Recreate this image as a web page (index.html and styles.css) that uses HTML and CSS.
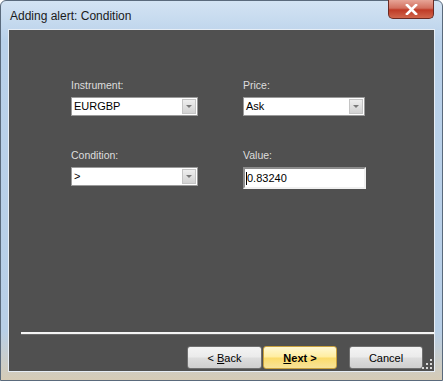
FILE: index.html
```html
<!DOCTYPE html>
<html>
  <head>
    <meta charset="utf-8" />
    <link rel="stylesheet" href="styles.css">
  </head>
  <body>
    <div class="window">
      <div class="titlebar">
        <span class="title">Adding alert: Condition</span>
        <button class="close">
          <svg width="13" height="11" viewBox="0 0 13 11">
            <path d="M2 1 L11 10 M11 1 L2 10" stroke="#ffffff" stroke-width="2.6" stroke-linecap="square" />
          </svg>
        </button>
      </div>

      <div class="client">
        <div class="form">
          <div class="field">
            <label>Instrument:</label>
            <div class="combo wide">
              <span class="combo-text">EURGBP</span>
              <span class="drop"><i></i></span>
            </div>
          </div>
          <div class="field">
            <label>Price:</label>
            <div class="combo">
              <span class="combo-text">Ask</span>
              <span class="drop"><i></i></span>
            </div>
          </div>
          <div class="field">
            <label>Condition:</label>
            <div class="combo wide">
              <span class="combo-text">&gt;</span>
              <span class="drop"><i></i></span>
            </div>
          </div>
          <div class="field">
            <label>Value:</label>
            <div class="textbox"><span class="caret"></span>0.83240</div>
          </div>
        </div>

        <div class="separator"></div>

        <div class="buttons">
          <button class="btn">&lt; <u>B</u>ack</button>
          <button class="btn next"><u>N</u>ext &gt;</button>
          <button class="btn cancel">Cancel</button>
        </div>

        <!-- size grip -->
        <svg class="grip" width="10" height="10" viewBox="0 0 10 10">
          <g fill="#d8d8d8">
            <rect x="8" y="0" width="2" height="2" />
            <rect x="4" y="4" width="2" height="2" />
            <rect x="8" y="4" width="2" height="2" />
            <rect x="0" y="8" width="2" height="2" />
            <rect x="4" y="8" width="2" height="2" />
            <rect x="8" y="8" width="2" height="2" />
          </g>
        </svg>
      </div>
    </div>
  </body>
</html>
```

FILE: styles.css
```css
/* Win7 style dialog */
body {
  margin: 0;
  width: 443px;
  height: 381px;
  overflow: hidden;
  font-family: "Liberation Sans", Arial, sans-serif;
}

.window {
  width: 443px;
  height: 381px;
  box-sizing: border-box;
  border: 1px solid #5a6a7c;
  border-radius: 6px 6px 0 0;
  background: linear-gradient(180deg, #d3e3f3 0px, #b9d1ea 40px, #b8cfe7 330px, #d7cbb4 381px);
  display: flex;
  flex-direction: column;
}

.titlebar {
  height: 28px;
  display: flex;
  justify-content: space-between;
  align-items: flex-start;
  padding-left: 9px;
  padding-right: 8px;
}

.title {
  font-family: "Liberation Sans", Arial, sans-serif;
  font-size: 12px;
  color: #1a1a1a;
  margin-top: 8px;
}

.close {
  width: 46px;
  height: 19px;
  margin-top: -1px;
  padding: 0;
  border: 1px solid #6b2a22;
  border-top: none;
  border-radius: 0 0 5px 5px;
  background: linear-gradient(180deg, #e7a597 0%, #d2705f 45%, #bf3a26 55%, #d0664c 100%);
  display: flex;
  align-items: center;
  justify-content: center;
}

.client {
  position: relative;
  flex: 1;
  margin: 0 7px 8px 7px;
  background: #505050;
  border: 1px solid #e6edf5;
  display: flex;
  flex-direction: column;
}

.form {
  display: grid;
  grid-template-columns: 128px 123px;
  column-gap: 44px;
  row-gap: 31px;
  padding: 47px 0 0 62px;
}

.field {
  display: flex;
  flex-direction: column;
  gap: 4px;
}

.field label {
  height: 16px;
  line-height: 16px;
  font-size: 10.5px;
  color: #dedede;
}

.combo {
  height: 19px;
  box-sizing: border-box;
  width: 122px;
  background: #ffffff;
  border: 1px solid #9a9a9a;
  display: flex;
  align-items: stretch;
}

.combo.wide {
  width: 127px;
}

.combo-text {
  flex: 1;
  font-size: 11px;
  line-height: 17px;
  padding-left: 2px;
  color: #000000;
}

.drop {
  width: 14px;
  margin: 1px;
  background: linear-gradient(180deg, #eeeeee, #d2d2d2);
  border: 1px solid #c4c4c4;
  box-sizing: border-box;
  display: flex;
  align-items: center;
  justify-content: center;
}

.drop i {
  width: 0;
  height: 0;
  border-left: 3px solid transparent;
  border-right: 3px solid transparent;
  border-top: 3px solid #7a7a7a;
}

.textbox {
  width: 123px;
  height: 22px;
  box-sizing: border-box;
  background: #ffffff;
  border: 2px solid;
  border-color: #8c8c8c #f0f0f0 #f0f0f0 #8c8c8c;
  font-size: 11px;
  line-height: 18px;
  padding-left: 1px;
  color: #000000;
  display: flex;
  align-items: center;
}

.caret {
  width: 1px;
  height: 13px;
  background: #000000;
}

.separator {
  margin-top: auto;
  margin-left: 12px;
  height: 2px;
  background: #f4f4f4;
  border-bottom: 1px solid #6a6a6a;
  margin-bottom: 11px;
}

.buttons {
  display: flex;
  justify-content: flex-end;
  padding: 0 11px 2px 0;
}

.btn {
  width: 75px;
  height: 23px;
  font-family: "Liberation Sans", Arial, sans-serif;
  font-size: 11px;
  color: #000000;
  border: 1px solid #707070;
  border-radius: 3px;
  background: linear-gradient(180deg, #f4f4f4 0%, #ebebeb 48%, #dddddd 52%, #cfcfcf 100%);
  padding: 0;
}

.next {
  margin-left: 1px;
  width: 74px;
  font-weight: bold;
  border-color: #c9a13d;
  background: linear-gradient(180deg, #fff8d3 0%, #ffeda0 48%, #fbdb6a 52%, #f7e39a 100%);
}

.cancel {
  margin-left: 12px;
  width: 74px;
}

.grip {
  position: absolute;
  right: 2px;
  bottom: 2px;
}
```
